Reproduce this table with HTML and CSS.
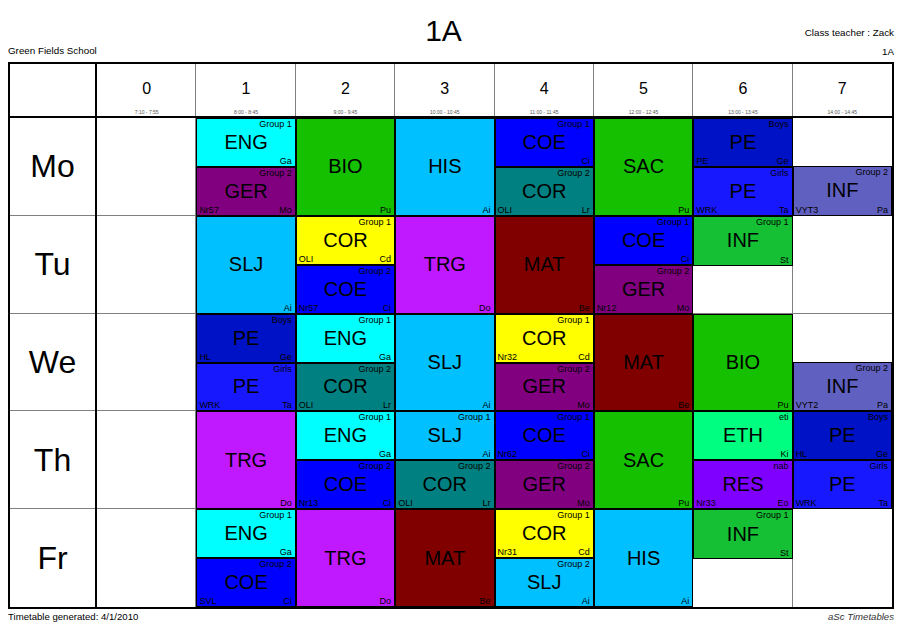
FILE: index.html
```html
<!DOCTYPE html>
<html lang="en">
<head>
<meta charset="utf-8">
<title>1A Timetable</title>
<link rel="stylesheet" href="styles.css">
</head>
<body>
<div class="page">
  <header class="head">
    <div class="school">Green Fields School</div>
    <h1 class="title">1A</h1>
    <div class="meta"><div>Class teacher : Zack</div><div>1A</div></div>
  </header>

  <div class="tt">
    <!-- header row -->
    <div class="corner"></div>
    <div class="ph"><div class="num">0</div><div class="time">7:10 - 7:55</div></div>
    <div class="ph"><div class="num">1</div><div class="time">8:00 - 8:45</div></div>
    <div class="ph"><div class="num">2</div><div class="time">9:00 - 9:45</div></div>
    <div class="ph"><div class="num">3</div><div class="time">10:00 - 10:45</div></div>
    <div class="ph"><div class="num">4</div><div class="time">11:00 - 11:45</div></div>
    <div class="ph"><div class="num">5</div><div class="time">12:00 - 12:45</div></div>
    <div class="ph"><div class="num">6</div><div class="time">13:00 - 13:45</div></div>
    <div class="ph last"><div class="num">7</div><div class="time">14:00 - 14:45</div></div>

    <!-- Monday -->
    <div class="day">Mo</div>
    <div class="slot"></div>
    <div class="slot">
      <div class="l eng"><div class="lt">Group 1</div><div class="ls">ENG</div><div class="lb"><span></span><span>Ga</span></div></div>
      <div class="l ger"><div class="lt">Group 2</div><div class="ls">GER</div><div class="lb"><span>Nr57</span><span>Mo</span></div></div>
    </div>
    <div class="slot">
      <div class="l grn"><div class="lt"></div><div class="ls">BIO</div><div class="lb"><span></span><span>Pu</span></div></div>
    </div>
    <div class="slot">
      <div class="l sky"><div class="lt"></div><div class="ls">HIS</div><div class="lb"><span></span><span>Ai</span></div></div>
    </div>
    <div class="slot">
      <div class="l coe"><div class="lt">Group 1</div><div class="ls">COE</div><div class="lb"><span></span><span>Ci</span></div></div>
      <div class="l teal"><div class="lt">Group 2</div><div class="ls">COR</div><div class="lb"><span>OLI</span><span>Lr</span></div></div>
    </div>
    <div class="slot">
      <div class="l grn"><div class="lt"></div><div class="ls">SAC</div><div class="lb"><span></span><span>Pu</span></div></div>
    </div>
    <div class="slot">
      <div class="l boys"><div class="lt">Boys</div><div class="ls">PE</div><div class="lb"><span>PE</span><span>Ge</span></div></div>
      <div class="l girls"><div class="lt">Girls</div><div class="ls">PE</div><div class="lb"><span>WRK</span><span>Ta</span></div></div>
    </div>
    <div class="slot r">
      <div class="e"></div>
      <div class="l slate"><div class="lt">Group 2</div><div class="ls">INF</div><div class="lb"><span>VYT3</span><span>Pa</span></div></div>
    </div>

    <!-- Tuesday -->
    <div class="day">Tu</div>
    <div class="slot"></div>
    <div class="slot">
      <div class="l sky"><div class="lt"></div><div class="ls">SLJ</div><div class="lb"><span></span><span>Ai</span></div></div>
    </div>
    <div class="slot">
      <div class="l yel"><div class="lt">Group 1</div><div class="ls">COR</div><div class="lb"><span>OLI</span><span>Cd</span></div></div>
      <div class="l coe"><div class="lt">Group 2</div><div class="ls">COE</div><div class="lb"><span>Nr57</span><span>Ci</span></div></div>
    </div>
    <div class="slot">
      <div class="l trg"><div class="lt"></div><div class="ls">TRG</div><div class="lb"><span></span><span>Do</span></div></div>
    </div>
    <div class="slot">
      <div class="l mat"><div class="lt"></div><div class="ls">MAT</div><div class="lb"><span></span><span>Be</span></div></div>
    </div>
    <div class="slot">
      <div class="l coe"><div class="lt">Group 1</div><div class="ls">COE</div><div class="lb"><span></span><span>Ci</span></div></div>
      <div class="l ger"><div class="lt">Group 2</div><div class="ls">GER</div><div class="lb"><span>Nr12</span><span>Mo</span></div></div>
    </div>
    <div class="slot">
      <div class="l inf"><div class="lt">Group 1</div><div class="ls">INF</div><div class="lb"><span></span><span>St</span></div></div>
      <div class="e"></div>
    </div>
    <div class="slot r"></div>

    <!-- Wednesday -->
    <div class="day">We</div>
    <div class="slot"></div>
    <div class="slot">
      <div class="l boys"><div class="lt">Boys</div><div class="ls">PE</div><div class="lb"><span>HL</span><span>Ge</span></div></div>
      <div class="l girls"><div class="lt">Girls</div><div class="ls">PE</div><div class="lb"><span>WRK</span><span>Ta</span></div></div>
    </div>
    <div class="slot">
      <div class="l eng"><div class="lt">Group 1</div><div class="ls">ENG</div><div class="lb"><span></span><span>Ga</span></div></div>
      <div class="l teal"><div class="lt">Group 2</div><div class="ls">COR</div><div class="lb"><span>OLI</span><span>Lr</span></div></div>
    </div>
    <div class="slot">
      <div class="l sky"><div class="lt"></div><div class="ls">SLJ</div><div class="lb"><span></span><span>Ai</span></div></div>
    </div>
    <div class="slot">
      <div class="l yel"><div class="lt">Group 1</div><div class="ls">COR</div><div class="lb"><span>Nr32</span><span>Cd</span></div></div>
      <div class="l ger"><div class="lt">Group 2</div><div class="ls">GER</div><div class="lb"><span></span><span>Mo</span></div></div>
    </div>
    <div class="slot">
      <div class="l mat"><div class="lt"></div><div class="ls">MAT</div><div class="lb"><span></span><span>Be</span></div></div>
    </div>
    <div class="slot">
      <div class="l grn"><div class="lt"></div><div class="ls">BIO</div><div class="lb"><span></span><span>Pu</span></div></div>
    </div>
    <div class="slot r">
      <div class="e"></div>
      <div class="l slate"><div class="lt">Group 2</div><div class="ls">INF</div><div class="lb"><span>VYT2</span><span>Pa</span></div></div>
    </div>

    <!-- Thursday -->
    <div class="day">Th</div>
    <div class="slot"></div>
    <div class="slot">
      <div class="l trg"><div class="lt"></div><div class="ls">TRG</div><div class="lb"><span></span><span>Do</span></div></div>
    </div>
    <div class="slot">
      <div class="l eng"><div class="lt">Group 1</div><div class="ls">ENG</div><div class="lb"><span></span><span>Ga</span></div></div>
      <div class="l coe"><div class="lt">Group 2</div><div class="ls">COE</div><div class="lb"><span>Nr13</span><span>Ci</span></div></div>
    </div>
    <div class="slot">
      <div class="l sky"><div class="lt">Group 1</div><div class="ls">SLJ</div><div class="lb"><span></span><span>Ai</span></div></div>
      <div class="l teal"><div class="lt">Group 2</div><div class="ls">COR</div><div class="lb"><span>OLI</span><span>Lr</span></div></div>
    </div>
    <div class="slot">
      <div class="l coe"><div class="lt">Group 1</div><div class="ls">COE</div><div class="lb"><span>Nr62</span><span>Ci</span></div></div>
      <div class="l ger"><div class="lt">Group 2</div><div class="ls">GER</div><div class="lb"><span></span><span>Mo</span></div></div>
    </div>
    <div class="slot">
      <div class="l grn"><div class="lt"></div><div class="ls">SAC</div><div class="lb"><span></span><span>Pu</span></div></div>
    </div>
    <div class="slot">
      <div class="l eth"><div class="lt">eti</div><div class="ls">ETH</div><div class="lb"><span></span><span>Ki</span></div></div>
      <div class="l res"><div class="lt">nab</div><div class="ls">RES</div><div class="lb"><span>Nr33</span><span>Eo</span></div></div>
    </div>
    <div class="slot r">
      <div class="l boys"><div class="lt">Boys</div><div class="ls">PE</div><div class="lb"><span>HL</span><span>Ge</span></div></div>
      <div class="l girls"><div class="lt">Girls</div><div class="ls">PE</div><div class="lb"><span>WRK</span><span>Ta</span></div></div>
    </div>

    <!-- Friday -->
    <div class="day b">Fr</div>
    <div class="slot b"></div>
    <div class="slot b">
      <div class="l eng"><div class="lt">Group 1</div><div class="ls">ENG</div><div class="lb"><span></span><span>Ga</span></div></div>
      <div class="l coe"><div class="lt">Group 2</div><div class="ls">COE</div><div class="lb"><span>SVL</span><span>Ci</span></div></div>
    </div>
    <div class="slot b">
      <div class="l trg"><div class="lt"></div><div class="ls">TRG</div><div class="lb"><span></span><span>Do</span></div></div>
    </div>
    <div class="slot b">
      <div class="l mat"><div class="lt"></div><div class="ls">MAT</div><div class="lb"><span></span><span>Be</span></div></div>
    </div>
    <div class="slot b">
      <div class="l yel"><div class="lt">Group 1</div><div class="ls">COR</div><div class="lb"><span>Nr31</span><span>Cd</span></div></div>
      <div class="l sky"><div class="lt">Group 2</div><div class="ls">SLJ</div><div class="lb"><span></span><span>Ai</span></div></div>
    </div>
    <div class="slot b">
      <div class="l sky"><div class="lt"></div><div class="ls">HIS</div><div class="lb"><span></span><span>Ai</span></div></div>
    </div>
    <div class="slot b">
      <div class="l inf"><div class="lt">Group 1</div><div class="ls">INF</div><div class="lb"><span></span><span>St</span></div></div>
      <div class="e"></div>
    </div>
    <div class="slot r b"></div>
  </div>

  <footer class="foot">
    <span>Timetable generated: 4/1/2010</span>
    <span class="brand">aSc Timetables</span>
  </footer>
</div>
</body>
</html>
```

FILE: styles.css
```css
* { box-sizing: border-box; }

body {
  margin: 0;
  background: #fff;
  color: #000;
  font-family: "Liberation Sans", Arial, sans-serif;
}

.page {
  width: 907px;
  padding-left: 8px;
}

/* ---------- header ---------- */
.head {
  width: 886px;
  height: 62px;
  display: grid;
  grid-template-columns: 1fr auto 1fr;
}

.school {
  font-size: 9.8px;
  line-height: 10px;
  padding-top: 46px;
}

.title {
  margin: 0 15px 0 0;
  padding-top: 16px;
  font-size: 30px;
  line-height: 30px;
  font-weight: normal;
}

.meta {
  text-align: right;
  font-size: 9.8px;
  line-height: 18.5px;
  padding-top: 24px;
}

/* ---------- timetable grid ---------- */
.tt {
  width: 886px;
  height: 547px;
  border: 2px solid #000;
  display: grid;
  grid-template-columns: 87px repeat(8, 1fr);
  grid-template-rows: 54px repeat(5, 1fr);
}

.corner {
  border-right: 2px solid #000;
  border-bottom: 2px solid #000;
}

.ph {
  border-bottom: 2px solid #000;
  box-shadow: inset -1px 0 0 #808080;
  display: flex;
  flex-direction: column;
  align-items: center;
  padding: 17px 0 1px;
}
.ph.last { box-shadow: none; }

.num {
  font-size: 16px;
  line-height: 16px;
}

.time {
  margin-top: auto;
  font-size: 5px;
  line-height: 6px;
  color: #555;
  white-space: nowrap;
}

.day {
  border-right: 2px solid #000;
  box-shadow: inset 0 -1px 0 #808080;
  display: flex;
  align-items: center;
  justify-content: center;
  font-size: 32px;
}
.day.b { box-shadow: none; }

.slot {
  box-shadow: inset -1px -1px 0 #808080;
  display: flex;
  flex-direction: column;
  min-width: 0;
  min-height: 0;
}
.slot.r { box-shadow: inset 0 -1px 0 #808080; }
.slot.b { box-shadow: inset -1px 0 0 #808080; }
.slot.r.b { box-shadow: none; }

/* ---------- lessons ---------- */
.l {
  flex: 1 1 0;
  min-height: 0;
  border: 1px solid #000;
  display: flex;
  flex-direction: column;
  overflow: hidden;
}

.e { flex: 1 1 0; }

.lt {
  height: 10px;
  padding: 0 3px;
  text-align: right;
  font-size: 9px;
  line-height: 10px;
  white-space: nowrap;
}

.ls {
  flex: 1;
  display: flex;
  align-items: center;
  justify-content: center;
  font-size: 20px;
}

.lb {
  height: 10px;
  padding: 0 3px 0 2px;
  display: flex;
  justify-content: space-between;
  font-size: 9px;
  line-height: 10px;
  white-space: nowrap;
}

.eng   { background: #00ffff; }
.ger   { background: #800080; }
.grn   { background: #14c000; }
.sky   { background: #00c0ff; }
.coe   { background: #0000ff; }
.teal  { background: #008080; }
.yel   { background: #ffff00; }
.boys  { background: #0012c6; }
.girls { background: #1818ff; }
.slate { background: #6060c0; }
.inf   { background: #15c035; }
.trg   { background: #c018ff; }
.mat   { background: #800000; }
.eth   { background: #00ff80; }
.res   { background: #8000ff; }

/* ---------- footer ---------- */
.foot {
  width: 886px;
  margin-top: 3px;
  display: flex;
  justify-content: space-between;
  font-size: 9.6px;
  line-height: 10px;
}

.brand {
  font-style: italic;
  color: #333;
}
```
